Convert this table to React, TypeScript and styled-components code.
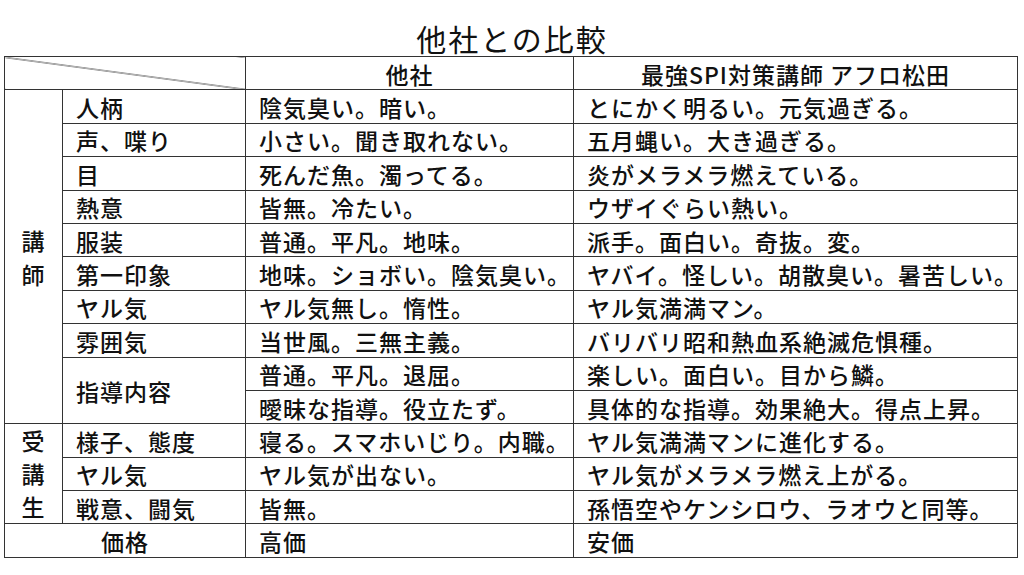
import React from "react";
import styled, { createGlobalStyle } from "styled-components";

const GlobalStyle = createGlobalStyle`
  html, body {
    margin: 0;
    padding: 0;
    background: #ffffff;
  }
  body {
    font-family: "Noto Sans CJK JP", "Noto Sans", sans-serif;
    color: #111111;
  }
`;

const Page = styled.div`
  width: 1024px;
  height: 575px;
  overflow: hidden;
  display: flex;
  flex-direction: column;
  align-items: flex-start;
`;

const Title = styled.h1`
  margin: 0;
  width: 1024px;
  height: 56px;
  display: flex;
  align-items: flex-end;
  justify-content: center;
  font-size: 30px;
  font-weight: 400;
  line-height: 1;
  letter-spacing: 2px;
  padding-bottom: 3px;
  box-sizing: border-box;
`;

const Table = styled.table`
  margin-left: 4px;
  width: 1013px;
  border-collapse: collapse;
  table-layout: fixed;
  font-size: 23px;
  font-weight: 500;
  line-height: 1;
  letter-spacing: 1px;
`;

const Row = styled.tr`
  height: 33.4px;
`;

const Cell = styled.td<{ $align?: "left" | "center" }>`
  border: 1px solid #333333;
  padding: 2px 0 0 ${({ $align }) => ($align === "center" ? "0" : "13px")};
  text-align: ${({ $align }) => $align ?? "left"};
  vertical-align: middle;
  white-space: nowrap;
`;

const CornerCell = styled.td`
  border: 1px solid #333333;
  padding: 0;
  background: linear-gradient(
    to top right,
    transparent calc(50% - 0.8px),
    #333333 50%,
    transparent calc(50% + 0.8px)
  );
`;

const GroupCell = styled.td`
  border: 1px solid #333333;
  padding: 0;
  text-align: center;
  vertical-align: middle;
`;

const GroupLabel = styled.div<{ $step: number }>`
  display: flex;
  flex-direction: column;
  align-items: center;
  line-height: ${({ $step }) => $step}px;
`;

type Item = { label: string; other: string; afro: string };

const teacher: Item[] = [
  { label: "人柄", other: "陰気臭い。暗い。", afro: "とにかく明るい。元気過ぎる。" },
  { label: "声、喋り", other: "小さい。聞き取れない。", afro: "五月蝿い。大き過ぎる。" },
  { label: "目", other: "死んだ魚。濁ってる。", afro: "炎がメラメラ燃えている。" },
  { label: "熱意", other: "皆無。冷たい。", afro: "ウザイぐらい熱い。" },
  { label: "服装", other: "普通。平凡。地味。", afro: "派手。面白い。奇抜。変。" },
  { label: "第一印象", other: "地味。ショボい。陰気臭い。", afro: "ヤバイ。怪しい。胡散臭い。暑苦しい。" },
  { label: "ヤル気", other: "ヤル気無し。惰性。", afro: "ヤル気満満マン。" },
  { label: "雰囲気", other: "当世風。三無主義。", afro: "バリバリ昭和熱血系絶滅危惧種。" },
];

const student: Item[] = [
  { label: "様子、態度", other: "寝る。スマホいじり。内職。", afro: "ヤル気満満マンに進化する。" },
  { label: "ヤル気", other: "ヤル気が出ない。", afro: "ヤル気がメラメラ燃え上がる。" },
  { label: "戦意、闘気", other: "皆無。", afro: "孫悟空やケンシロウ、ラオウと同等。" },
];

function Group({ text, step }: { text: string; step: number }) {
  return (
    <GroupLabel $step={step}>
      {text.split("").map((c, i) => (
        <span key={i}>{c}</span>
      ))}
    </GroupLabel>
  );
}

export default function App() {
  return (
    <Page>
      <GlobalStyle />
      <Title>他社との比較</Title>
      <Table>
        <colgroup>
          <col style={{ width: 58 }} />
          <col style={{ width: 183 }} />
          <col style={{ width: 328 }} />
          <col style={{ width: 444 }} />
        </colgroup>
        <tbody>
          <Row>
            <CornerCell colSpan={2} />
            <Cell $align="center">他社</Cell>
            <Cell $align="center">最強SPI対策講師 アフロ松田</Cell>
          </Row>
          {teacher.map((item, i) => (
            <Row key={item.label}>
              {i === 0 && (
                <GroupCell rowSpan={teacher.length + 2}>
                  <Group text="講師" step={34} />
                </GroupCell>
              )}
              <Cell>{item.label}</Cell>
              <Cell>{item.other}</Cell>
              <Cell>{item.afro}</Cell>
            </Row>
          ))}
          <Row>
            <Cell rowSpan={2}>指導内容</Cell>
            <Cell>普通。平凡。退屈。</Cell>
            <Cell>楽しい。面白い。目から鱗。</Cell>
          </Row>
          <Row>
            <Cell>曖昧な指導。役立たず。</Cell>
            <Cell>具体的な指導。効果絶大。得点上昇。</Cell>
          </Row>
          {student.map((item, i) => (
            <Row key={item.label + i}>
              {i === 0 && (
                <GroupCell rowSpan={student.length}>
                  <Group text="受講生" step={33} />
                </GroupCell>
              )}
              <Cell>{item.label}</Cell>
              <Cell>{item.other}</Cell>
              <Cell>{item.afro}</Cell>
            </Row>
          ))}
          <Row>
            <Cell colSpan={2} $align="center">
              価格
            </Cell>
            <Cell>高価</Cell>
            <Cell>安価</Cell>
          </Row>
        </tbody>
      </Table>
    </Page>
  );
}
